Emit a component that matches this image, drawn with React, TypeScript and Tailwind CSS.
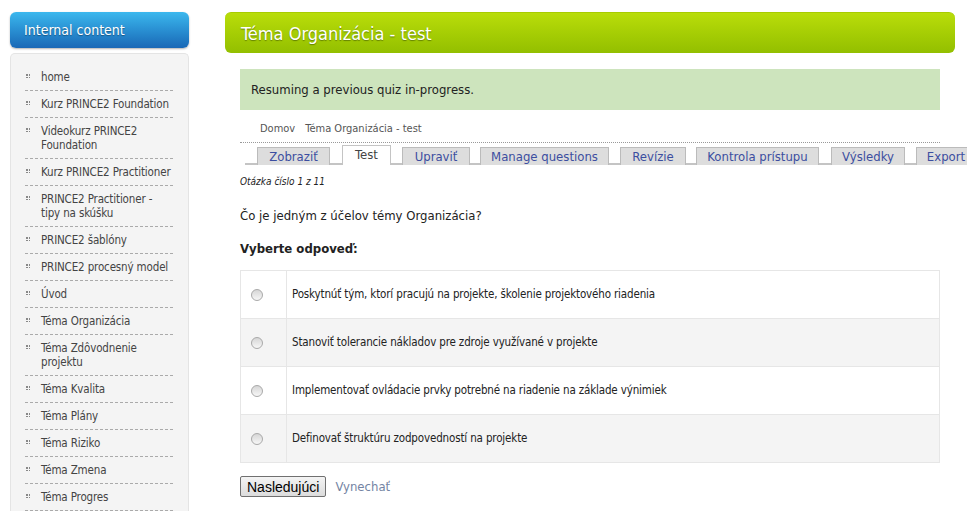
const font = "font-['Tahoma','DejaVu_Sans_Condensed','Liberation_Sans',sans-serif]";

const menu = [
  "home",
  "Kurz PRINCE2 Foundation",
  "Videokurz PRINCE2 Foundation",
  "Kurz PRINCE2 Practitioner",
  "PRINCE2 Practitioner -\ntipy na skúšku",
  "PRINCE2 šablóny",
  "PRINCE2 procesný model",
  "Úvod",
  "Téma Organizácia",
  "Téma Zdôvodnenie projektu",
  "Téma Kvalita",
  "Téma Plány",
  "Téma Riziko",
  "Téma Zmena",
  "Téma Progres",
];

const tabs = [
  { label: "Zobraziť", w: "w-[73px]", ml: "ml-[12px]" },
  { label: "Test", w: "w-[49px]", ml: "ml-[12px]", active: true },
  { label: "Upraviť", w: "w-[68px]", ml: "ml-[11px]" },
  { label: "Manage questions", w: "w-[129px]", ml: "ml-[10px]" },
  { label: "Revízie", w: "w-[66px]", ml: "ml-[11px]" },
  { label: "Kontrola prístupu", w: "w-[123px]", ml: "ml-[10px]" },
  { label: "Výsledky", w: "w-[74px]", ml: "ml-[12px]" },
  { label: "Export", w: "w-[60px]", ml: "ml-[11px]" },
];

const answers = [
  "Poskytnúť tým, ktorí pracujú na projekte, školenie projektového riadenia",
  "Stanoviť tolerancie nákladov pre zdroje využívané v projekte",
  "Implementovať ovládacie prvky potrebné na riadenie na základe výnimiek",
  "Definovať štruktúru zodpovedností na projekte",
];

function Bullet() {
  return (
    <span className="mt-[4px] grid h-[4px] w-[4px] shrink-0 grid-cols-2 gap-[1px]">
      <span className="h-[1.5px] w-[1.5px] bg-[#888]" />
      <span className="h-[1.5px] w-[1.5px] bg-[#888]" />
      <span className="h-[1.5px] w-[1.5px] bg-[#888]" />
      <span className="h-[1.5px] w-[1.5px] bg-[#888]" />
    </span>
  );
}

function Sidebar() {
  return (
    <aside className="w-[179px] shrink-0">
      <div className="flex h-[36px] items-center rounded-[6px] bg-gradient-to-b from-[#3cb8ee] to-[#1a68b6] pl-[14px] text-[14px] text-white shadow-[0_1px_2px_rgba(0,0,0,0.3)] [text-shadow:0_1px_1px_rgba(0,0,0,0.35)]">
        Internal content
      </div>
      <div className="mt-[5px] rounded-t-[5px] border border-b-0 border-[#e4e4e4] bg-[#f4f4f4] pl-[14px] pr-[15px] pt-[10px]">
        <ul>
          {menu.map((m) => (
            <li
              key={m}
              className="flex gap-[11px] border-b border-dashed border-[#aaa] py-[6px] pl-[1px] text-[11.5px] leading-[14px] tracking-[-0.15px] text-[#444]"
            >
              <Bullet />
              <span className="-mr-[6px] flex-1 whitespace-pre-line">{m}</span>
            </li>
          ))}
        </ul>
      </div>
    </aside>
  );
}

function Radio() {
  return (
    <span className="block h-[12px] w-[12px] rounded-full border border-[#a9a9a9] bg-gradient-to-b from-[#d6d6d6] to-[#f7f7f7]" />
  );
}

export default function App() {
  return (
    <div className={`h-[512px] w-[967px] overflow-hidden bg-white ${font}`}>
      <div className="flex gap-[36px] pl-[10px] pt-[12px]">
        <Sidebar />
        <main className="w-[730px] shrink-0">
          <div className="flex h-[41px] items-center rounded-[6px] border-t border-[#a8cc00] bg-gradient-to-b from-[#b9dd0a] to-[#93bf00] pl-[16px] text-[18px] text-white [text-shadow:0_1px_1px_rgba(60,80,0,0.6)]">
            Téma Organizácia - test
          </div>

          <div className="px-[15px]">
            <div className="mt-[16px] flex h-[41px] items-center bg-[#cde4bd] pl-[11px] text-[13px] text-[#222]">
              Resuming a previous quiz in-progress.
            </div>

            <div className="flex h-[33px] items-end gap-[10px] border-b border-dotted border-[#999] pb-[7px] pl-[20px] text-[11px] leading-[13px] text-[#555]">
              <span>Domov</span>
              <span>Téma Organizácia - test</span>
            </div>

            <div className="ml-[5px] mt-[4px] flex h-[18px] w-[690px] flex-nowrap items-end border-b-2 border-[#c4c4c4]">
              {tabs.map((t) => (
                <div
                  key={t.label}
                  className={`${t.w} ${t.ml} -mb-[2px] flex h-[18px] shrink-0 items-center justify-center whitespace-nowrap border border-b-0 text-[13px] leading-none ${
                    t.active
                      ? "h-[20px] border-[#c4c4c4] bg-white pb-[2px] text-[#444]"
                      : "border-[#bbb] bg-[#dddddd] text-[#3c4ea0]"
                  }`}
                >
                  {t.label}
                </div>
              ))}
            </div>

            <p className="mt-[11px] text-[10px] italic leading-[12px] text-[#222]">Otázka číslo 1 z 11</p>

            <p className="mt-[20px] text-[13px] leading-[16px] text-[#222]">Čo je jedným z účelov témy Organizácia?</p>

            <p className="mt-[17px] text-[13px] font-bold leading-[16px] text-[#222]">Vyberte odpoveď:</p>

            <div className="mt-[13px] border border-[#e6e6e6]">
              {answers.map((a, i) => (
                <div
                  key={a}
                  className={`flex ${i > 0 ? "h-[48px] border-t border-[#e6e6e6]" : "h-[47px]"} ${
                    i % 2 === 1 ? "bg-[#f4f4f4]" : "bg-white"
                  }`}
                >
                  <div className="flex w-[46px] shrink-0 items-center border-r border-[#e6e6e6] pl-[10px]">
                    <Radio />
                  </div>
                  <div className="flex items-center pl-[5px] text-[11.5px] tracking-[-0.15px] text-[#222]">{a}</div>
                </div>
              ))}
            </div>

            <div className="mt-[13px] flex items-center gap-[9px]">
              <button className="h-[21px] rounded-[2px] border border-[#707070] bg-gradient-to-b from-[#f4f4f4] to-[#dcdcdc] px-[6px] font-['Liberation_Sans',sans-serif] text-[14px] leading-none text-black">
                Nasledujúci
              </button>
              <span className="text-[13px] text-[#7484a3]">Vynechať</span>
            </div>
          </div>
        </main>
      </div>
    </div>
  );
}
